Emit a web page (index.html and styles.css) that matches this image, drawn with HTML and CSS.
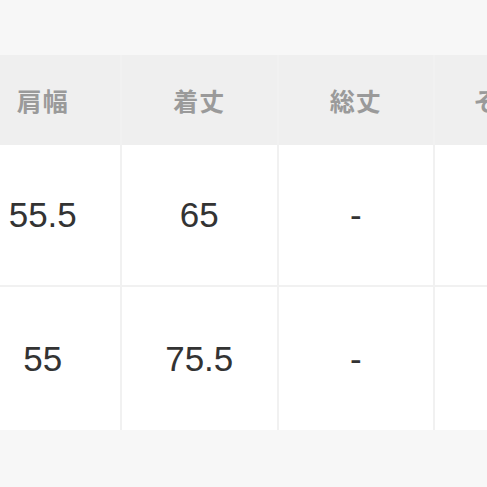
FILE: index.html
```html
<!DOCTYPE html>
<html lang="ja">
<head>
<meta charset="utf-8">
<link rel="stylesheet" href="styles.css">
</head>
<body>
<div class="page">
  <div class="size-table">
    <div class="cell head">肩幅</div>
    <div class="cell head">着丈</div>
    <div class="cell head">総丈</div>
    <div class="cell head">その他</div>
    <div class="cell val">55.5</div>
    <div class="cell val">65</div>
    <div class="cell val">-</div>
    <div class="cell val"></div>
    <div class="cell val last">55</div>
    <div class="cell val last">75.5</div>
    <div class="cell val last">-</div>
    <div class="cell val last"></div>
  </div>
</div>
</body>
</html>
```

FILE: styles.css
```css
html, body {
  margin: 0;
  padding: 0;
  background: #f7f7f7;
}
.page {
  width: 487px;
  height: 487px;
  overflow: hidden;
  padding-top: 55px;
  box-sizing: border-box;
}
.size-table {
  display: grid;
  grid-template-columns: repeat(4, 156.5px);
  grid-template-rows: 90px 142px 143px;
  margin-left: -34.5px;
  width: max-content;
}
.cell {
  box-sizing: border-box;
  display: flex;
  align-items: center;
  justify-content: center;
  border-right: 2px solid #f1f1f1;
}
.head {
  background: #efefef;
  color: #9a9a9a;
  font-family: "Noto Sans CJK JP", sans-serif;
  font-weight: 700;
  font-size: 25px;
  letter-spacing: 1px;
}
.val {
  background: #ffffff;
  color: #333333;
  font-family: "Liberation Sans", Arial, sans-serif;
  font-size: 35px;
  border-bottom: 2px solid #f1f1f1;
}
.val.last {
  border-bottom: none;
}
```
